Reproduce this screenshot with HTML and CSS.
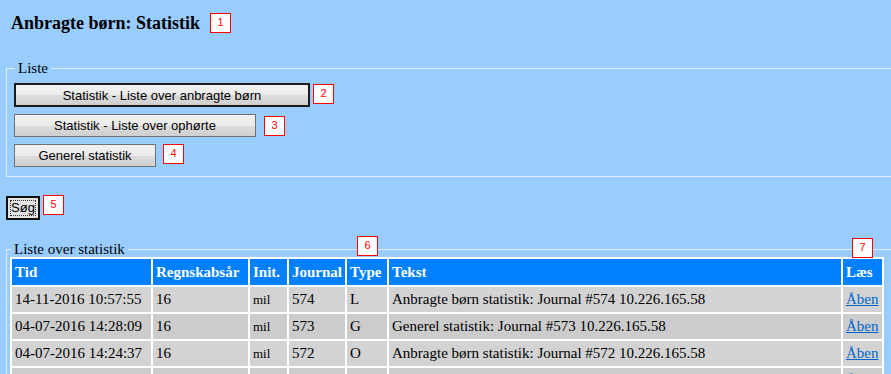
FILE: index.html
```html
<!DOCTYPE html>
<html lang="da">
<head>
    <meta charset="UTF-8">
    <meta name="viewport" content="width=device-width, initial-scale=1.0">
    <title>Anbragte børn: Statistik</title>
    <link rel="stylesheet" href="styles.css">
</head>
<body>
    <div class="page-head">
        <h1>Anbragte børn: Statistik</h1>
        <span class="tag tag-head">1</span>
    </div>

    <fieldset class="box">
        <legend>Liste</legend>
        <div class="btn-row">
            <button class="btn btn-default btn-wide">Statistik - Liste over anbragte børn</button>
            <span class="tag tag-near">2</span>
        </div>
        <div class="btn-row">
            <button class="btn btn-mid">Statistik - Liste over ophørte</button>
            <span class="tag tag-far">3</span>
        </div>
        <div class="btn-row">
            <button class="btn btn-small">Generel statistik</button>
            <span class="tag tag-far tag-low">4</span>
        </div>
    </fieldset>

    <div class="search-row">
        <button class="btn btn-search"><span class="focus-ring">Søg</span></button>
        <span class="tag">5</span>
    </div>

    <div class="results">
        <fieldset class="box box-results">
            <legend>Liste over statistik</legend>
            <table class="stats">
                <thead>
                    <tr>
                        <th class="col-time">Tid</th>
                        <th class="col-year">Regnskabsår</th>
                        <th class="col-init">Init.</th>
                        <th class="col-journal">Journal</th>
                        <th class="col-type">Type</th>
                        <th class="col-text">Tekst</th>
                        <th class="col-read">Læs</th>
                    </tr>
                </thead>
                <tbody>
                    <tr>
                        <td>14-11-2016 10:57:55</td>
                        <td>16</td>
                        <td class="init">mil</td>
                        <td>574</td>
                        <td>L</td>
                        <td>Anbragte børn statistik: Journal #574 10.226.165.58</td>
                        <td><a href="#">Åben</a></td>
                    </tr>
                    <tr class="alt">
                        <td>04-07-2016 14:28:09</td>
                        <td>16</td>
                        <td class="init">mil</td>
                        <td>573</td>
                        <td>G</td>
                        <td>Generel statistik: Journal #573 10.226.165.58</td>
                        <td><a href="#">Åben</a></td>
                    </tr>
                    <tr>
                        <td>04-07-2016 14:24:37</td>
                        <td>16</td>
                        <td class="init">mil</td>
                        <td>572</td>
                        <td>O</td>
                        <td>Anbragte børn statistik: Journal #572 10.226.165.58</td>
                        <td><a href="#">Åben</a></td>
                    </tr>
                    <tr class="alt">
                        <td>04-07-2016 14:19:12</td>
                        <td>16</td>
                        <td class="init">mil</td>
                        <td>571</td>
                        <td>L</td>
                        <td>Anbragte børn statistik: Journal #571 10.226.165.58</td>
                        <td><a href="#">Åben</a></td>
                    </tr>
                </tbody>
            </table>
        </fieldset>
        <!-- annotation markers over the fieldset edge -->
        <span class="tag tag-float tag-6">6</span>
        <span class="tag tag-float tag-7">7</span>
    </div>
</body>
</html>
```

FILE: styles.css
```css
html, body {
    overflow: hidden;
}

body {
    margin: 0;
    background-color: #99ccff;
    font-family: "Liberation Serif", "Times New Roman", serif;
    color: #000;
}

/* red numbered markers */
.tag {
    box-sizing: border-box;
    display: inline-block;
    width: 21px;
    height: 20px;
    border: 1px solid #ff0000;
    background-color: #fff;
    color: #ff0000;
    font-family: "Liberation Sans", Arial, sans-serif;
    font-size: 11px;
    line-height: 16px;
    text-align: center;
    flex: none;
}

.page-head {
    display: flex;
    align-items: flex-start;
    gap: 10px;
    padding: 12px 0 0 11px;
}

.page-head h1 {
    margin: 0;
    font-size: 18px;
    line-height: 22px;
    font-weight: bold;
}

.tag-head {
    margin-top: 1px;
}

.box {
    margin: 26px -30px 0 6px;
    padding: 7px 0 9px 7px;
    border: 1px solid #e4eefa;
    min-width: 0;
}

.box legend {
    margin-left: 1px;
    padding: 0 3px;
    font-size: 15px;
    line-height: 16px;
}

.btn-row {
    display: flex;
    align-items: flex-start;
    margin-bottom: 7px;
}

.btn-row:last-child {
    margin-bottom: 0;
}

.btn-row + .btn-row + .btn-row {
    margin-top: 1px;
}

.btn {
    box-sizing: border-box;
    height: 23px;
    padding: 0;
    border: 1px solid #707070;
    border-radius: 0;
    background: linear-gradient(#f2f2f2, #ebebeb 50%, #dddddd 51%, #cfcfcf);
    font-family: "Liberation Sans", Arial, sans-serif;
    font-size: 13px;
    color: #000;
}

.btn-default {
    height: 24px;
    border: 2px solid #1a1a1a;
}

.btn-wide {
    width: 296px;
}

.btn-mid {
    width: 242px;
}

.btn-small {
    width: 142px;
}

.tag-near {
    margin: 1px 0 0 3px;
}

.tag-far {
    margin: 2px 0 0 8px;
}

.tag-low {
    margin-top: 0;
    margin-left: 7px;
}

.search-row {
    display: flex;
    align-items: flex-start;
    gap: 3px;
    margin: 18px 0 0 6px;
}

.btn-search {
    width: 34px;
    height: 24px;
    margin-top: 1px;
    padding: 2px;
    border: 2px solid #111;
    background: #e3e3e3;
}

.focus-ring {
    display: block;
    height: 100%;
    box-sizing: border-box;
    border: 1px dotted #333;
    line-height: 14px;
}

.results {
    position: relative;
    margin-top: 21px;
}

.box-results {
    margin-top: 0;
    padding: 0 0 0 3px;
    height: 200px;
}

.tag-float {
    position: absolute;
}

.tag-6 {
    top: -5px;
    left: 357px;
}

.tag-7 {
    top: -3px;
    left: 852px;
}

.stats {
    width: 874px;
    table-layout: fixed;
    border-collapse: separate;
    border-spacing: 2px;
    background-color: #fff;
    font-size: 15px;
}

.stats th,
.stats td {
    box-sizing: border-box;
    padding: 0 2px 0 3px;
    text-align: left;
    vertical-align: middle;
    white-space: nowrap;
    overflow: hidden;
}

.stats th {
    height: 26px;
    background-color: #0080ff;
    color: #fff;
    font-weight: bold;
}

.stats td {
    height: 25px;
    background-color: #d3d3d3;
}

.stats tr.alt td {
    background-color: #cccccc;
}

.stats td.init {
    font-size: 13px;
}

.stats a {
    color: #0066cc;
}

.col-time { width: 139px; }
.col-year { width: 95px; }
.col-init { width: 37px; }
.col-journal { width: 56px; }
.col-type { width: 40px; }
.col-text { width: 452px; }
.col-read { width: 39px; }
```
